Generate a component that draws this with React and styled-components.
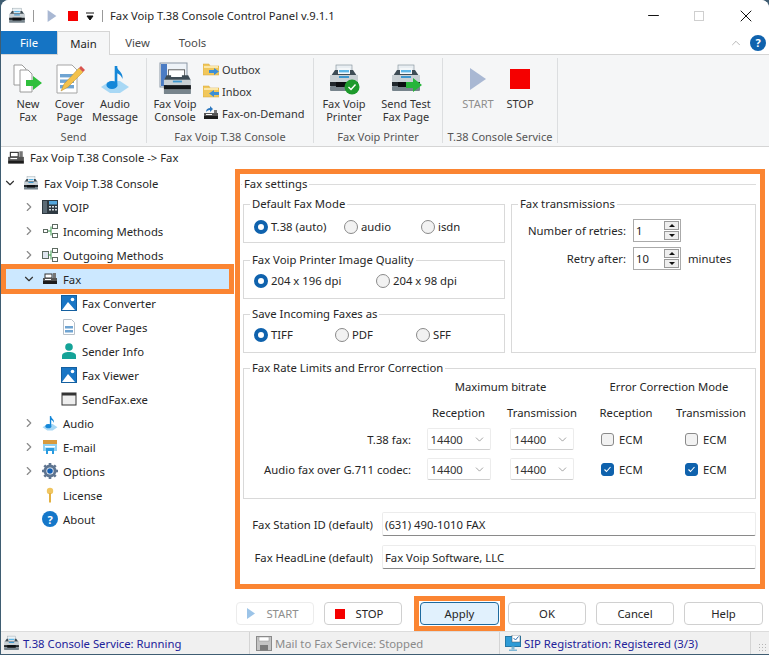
import styled, { createGlobalStyle } from 'styled-components';
import { ChevronDown, ChevronRight, ChevronUp, Minus, X } from 'lucide-react';

const ORANGE = '#fb8532';

const GlobalStyle = createGlobalStyle`
  html, body {
    margin: 0;
    padding: 0;
    width: 769px;
    height: 655px;
    overflow: hidden;
    background: #3f5d72;
  }
  * { box-sizing: border-box; }
  body {
    font-family: "Noto Sans", "Open Sans", sans-serif;
    font-size: 11.3px;
    color: #262626;
  }
`;

const Window = styled.div`
  width: 768px;
  height: 654px;
  margin-left: 1px;
  background: #fff;
  border-radius: 8px 8px 0 0;
  display: flex;
  flex-direction: column;
  overflow: hidden;
`;

const TitleBar = styled.div`
  height: 31px;
  flex: none;
  display: flex;
  align-items: center;
  padding-left: 7px;
  background: #fff;
`;

const QuickSep = styled.div`
  width: 1px;
  height: 12px;
  background: #999;
  margin-left: ${(p) => p.$left || 0}px;
`;

const QuickSlot = styled.div`
  display: flex;
  margin-left: ${(p) => p.$left}px;
`;

const Title = styled.div`
  font-size: 11.25px;
  margin-left: 7px;
  color: #1f1f1f;
`;

const WinControls = styled.div`
  margin-left: auto;
  display: flex;
  align-items: center;
  padding-right: 13px;
  gap: 32px;
`;

const MaxBox = styled.div`
  width: 10px;
  height: 10px;
  border: 1px solid #cfcfcf;
`;

const TabRow = styled.div`
  height: 23px;
  flex: none;
  display: flex;
  align-items: stretch;
  position: relative;
`;

const FileTab = styled.div`
  width: 56px;
  background: #1574c4;
  color: #fff;
  display: flex;
  align-items: center;
  justify-content: center;
`;

const Tab = styled.div`
  width: ${(p) => p.$w}px;
  display: flex;
  align-items: center;
  justify-content: center;
  color: #4a4a4a;
  ${(p) => p.$active && `
    background: #f5f6f7;
    color: #262626;
    border: 1px solid #d5d5d5;
    border-bottom: none;
    margin-bottom: -1px;
    position: relative;
    z-index: 1;
  `}
`;

const TabTools = styled.div`
  margin-left: auto;
  display: flex;
  align-items: center;
  gap: 7px;
  padding-right: 3px;
`;

const HelpDot = styled.div`
  width: 16px;
  height: 16px;
  border-radius: 50%;
  background: ${(p) => p.$bg || '#0f62ad'};
  color: #fff;
  font-weight: 700;
  font-size: 11px;
  line-height: 1;
  display: flex;
  align-items: center;
  justify-content: center;
  flex: none;
`;

const Ribbon = styled.div`
  height: 93px;
  flex: none;
  background: #f5f6f7;
  border-top: 1px solid #d5d5d5;
  border-bottom: 1px solid #d5d5d5;
  display: flex;
`;

const RibbonGroup = styled.div`
  width: ${(p) => p.$w}px;
  display: flex;
  flex-direction: column;
  margin: 3px 0;
  border-right: 1px solid #dcdee0;
`;

const GroupBody = styled.div`
  flex: 1;
  display: flex;
  padding-left: ${(p) => p.$pad || 0}px;
`;

const GroupLabel = styled.div`
  height: 17px;
  margin-bottom: -3px;
  text-align: center;
  color: #555;
  font-size: 11px;
`;

const BigButton = styled.div`
  width: ${(p) => p.$w}px;
  display: flex;
  flex-direction: column;
  align-items: center;
  color: ${(p) => (p.$disabled ? '#8e8e8e' : '#333')};
`;

const BigIcon = styled.div`
  height: 33px;
  margin-top: 4px;
  display: flex;
  align-items: center;
  justify-content: center;
`;

const BigLabel = styled.div`
  margin-top: 2px;
  text-align: center;
  line-height: 13px;
  font-size: 11px;
  white-space: pre-line;
`;

const SmallList = styled.div`
  display: flex;
  flex-direction: column;
  margin-left: 3px;
  padding-top: 3px;
  gap: 6px;
`;

const SmallButton = styled.div`
  height: 16px;
  display: flex;
  align-items: center;
  gap: 3px;
  font-size: 11px;
  color: #333;
`;

const Breadcrumb = styled.div`
  height: 22px;
  flex: none;
  padding-left: 6px;
  padding-bottom: 1px;
  display: flex;
  align-items: center;
  gap: 5px;
`;

const Body = styled.div`
  flex: 1;
  min-height: 0;
  display: flex;
`;

const Tree = styled.div`
  width: 234px;
  flex: none;
  padding-top: 2px;
`;

const TreeRow = styled.div`
  height: 24px;
  display: flex;
  align-items: center;
  padding-left: ${(p) => p.$indent}px;
`;

const SelectedRow = styled(TreeRow)`
  height: 20px;
  margin: 2px 6px 2px 5px;
  background: #cce8ff;
  outline: 5px solid ${ORANGE};
  padding-left: ${(p) => p.$indent - 5}px;
`;

const Caret = styled.div`
  width: 16px;
  height: 16px;
  flex: none;
  display: flex;
  align-items: center;
  justify-content: center;
  margin-right: 5px;
  color: ${(p) => (p.$open ? '#333' : '#8a8a8a')};
`;

const TreeIcon = styled.div`
  width: 16px;
  height: 16px;
  flex: none;
  margin-right: 5px;
  display: flex;
  align-items: center;
  justify-content: center;
`;

const Main = styled.div`
  flex: 1;
  display: flex;
  flex-direction: column;
`;

const Panel = styled.div`
  width: 530px;
  height: 421px;
  border: 5px solid ${ORANGE};
  padding: 2px 5px 0 1px;
`;

const SettingsSet = styled.fieldset`
  margin: 0;
  padding: 4px 0 0 2px;
  border: none;
  border-top: 1px solid #dcdcdc;
`;

const Legend = styled.legend`
  padding: 0 2px;
  margin-left: ${(p) => p.$left ?? 6}px;
  line-height: 16px;
`;

const Group = styled.fieldset`
  margin: ${(p) => p.$mt || 0}px 0 0;
  padding: 0;
  min-width: 0;
  height: ${(p) => p.$h}px;
  border: 1px solid #d9d9d9;
`;

const TopGrid = styled.div`
  display: grid;
  grid-template-columns: 262px 245px;
  column-gap: 6px;
`;

const LeftCol = styled.div`
  display: flex;
  flex-direction: column;
`;

const RadioRow = styled.div`
  display: flex;
  padding: ${(p) => p.$top}px 0 0 10px;
`;

const RadioOption = styled.div`
  width: ${(p) => p.$w}px;
  display: flex;
  align-items: center;
  gap: 3px;
`;

const RadioDot = styled.span`
  width: 14px;
  height: 14px;
  flex: none;
  border-radius: 50%;
  ${(p) =>
    p.$on
      ? 'background: #fff; border: 4px solid #0f62ad;'
      : 'background: #f2f2f2; border: 1px solid #8a8a8a;'}
`;

const SpinRow = styled.div`
  display: grid;
  grid-template-columns: 114px 48px auto;
  column-gap: 7px;
  align-items: center;
  margin-top: ${(p) => p.$top}px;
`;

const SpinLabel = styled.div`
  text-align: right;
`;

const SpinBox = styled.div`
  height: 23px;
  border: 1px solid #aaa;
  display: flex;
  align-items: center;
  justify-content: space-between;
  padding: 0 1px 0 2px;
`;

const SpinArrows = styled.div`
  display: flex;
  flex-direction: column;
  gap: 1px;
`;

const SpinArrow = styled.div`
  width: 15px;
  height: 9px;
  background: #eee;
  border: 1px solid #999;
  display: flex;
  align-items: center;
  justify-content: center;
  &::before {
    content: '';
    border-left: 3px solid transparent;
    border-right: 3px solid transparent;
    ${(p) => (p.$down ? 'border-top: 3px solid #111;' : 'border-bottom: 3px solid #111;')}
  }
`;

const RateGroup = styled(Group)`
  width: 513px;
`;

const RateGrid = styled.div`
  display: grid;
  grid-template-columns: 173px 83px 84px 84px 86px;
  grid-template-rows: 21px 30px 24px 36px;
  align-items: center;
  justify-items: center;
`;

const HeadSpan = styled.div`
  grid-column: span 2;
`;

const RowLabel = styled.div`
  justify-self: end;
  padding-right: 6px;
`;

const SelectBox = styled.div`
  width: 64px;
  height: 22px;
  background: #fff;
  border: 1px solid #ececec;
  border-bottom-color: #cfcfcf;
  border-radius: 2px;
  display: flex;
  align-items: center;
  justify-content: space-between;
  padding: 0 4px 0 3px;
  color: #333;
`;

const EcmCell = styled.div`
  justify-self: start;
  padding-left: 17px;
  display: flex;
  align-items: center;
  gap: 5px;
`;

const CheckBox = styled.span`
  width: 13px;
  height: 13px;
  border-radius: 3px;
  display: flex;
  align-items: center;
  justify-content: center;
  background: ${(p) => (p.$on ? '#0f62ad' : '#f2f2f2')};
  border: 1px solid ${(p) => (p.$on ? '#0f62ad' : '#8a8a8a')};
`;

const StationList = styled.div`
  margin-top: 13px;
  display: flex;
  flex-direction: column;
  gap: 9px;
`;

const StationRow = styled.div`
  display: flex;
  align-items: center;
`;

const StationLabel = styled.div`
  width: 130px;
  text-align: right;
  white-space: nowrap;
`;

const StationInput = styled.div`
  width: 374px;
  height: 24px;
  margin-left: 9px;
  border: 1px solid #ececec;
  border-bottom-color: #8a8a8a;
  border-radius: 2px;
  display: flex;
  align-items: center;
  padding-left: 2px;
`;

const ButtonBar = styled.div`
  display: flex;
  align-items: center;
  margin-top: 7px;
  gap: 10px;
  padding-left: 1px;
`;

const Btn = styled.div`
  width: ${(p) => p.$w || 78}px;
  height: 23px;
  flex: none;
  border: 1px solid ${(p) => (p.$disabled ? '#ececec' : '#d0d0d0')};
  border-radius: 4px;
  background: #fff;
  color: ${(p) => (p.$disabled ? '#8e8e8e' : '#262626')};
  display: flex;
  align-items: center;
  justify-content: center;
  gap: 11px;
  padding-right: ${(p) => p.$shift || 0}px;
`;

const ApplyFrame = styled.div`
  flex: none;
  border: 5px solid ${ORANGE};
  padding: 1px;
  margin: 0 -7px 0 2px;
`;

const ApplyBtn = styled(Btn)`
  background: #e1f1fd;
  border: 1px solid #1e6a9e;
`;

const StatusBar = styled.div`
  height: 23px;
  flex: none;
  background: #f0f0f0;
  border-top: 1px solid #dcdcdc;
  display: flex;
  position: relative;
`;

const StatusCell = styled.div`
  width: ${(p) => p.$w}px;
  display: flex;
  align-items: center;
  gap: 3px;
  padding-left: ${(p) => p.$pad}px;
  border-right: 1px solid #d4d4d4;
  color: ${(p) => p.$color};
  white-space: nowrap;
  overflow: hidden;
`;

const GripIcon = styled.div`
  position: absolute;
  right: 2px;
  bottom: 2px;
  width: 9px;
  height: 9px;
  background-image: radial-gradient(#b5b5b5 1px, transparent 1px);
  background-size: 3px 3px;
`;

const StopSquare = styled.div`
  width: ${(p) => p.$size}px;
  height: ${(p) => p.$size}px;
  background: #f50000;
  flex: none;
`;

const Printer = ({ size = 32, badge }) => (
  <svg width={size} height={size} viewBox="0 0 32 32">
    <rect x="8" y="2" width="16" height="9" fill="#e8eef2" stroke="#7c8b94" strokeWidth=".6" />
    <path d="M7 7h18l4 6H3z" fill="#3e4c55" />
    <rect x="10" y="5" width="12" height="6" fill="#f4f7f9" />
    <rect x="11" y="7" width="10" height="2.4" fill="#5cb6e6" />
    <rect x="2" y="12" width="28" height="7" fill="#c9d0d4" />
    <rect x="11" y="13" width="10" height="2" fill="#3d97cf" />
    <rect x="2" y="19" width="28" height="4" fill="#20272c" />
    <rect x="2" y="23" width="28" height="5" rx="1" fill="#77848c" />
    <rect x="8" y="19" width="16" height="5" fill="#0c0f12" />
    {badge === 'check' && (
      <>
        <circle cx="24" cy="24" r="7.5" fill="#1d9a2c" />
        <path d="M20.5 24l2.5 2.5 4.5-5" fill="none" stroke="#fff" strokeWidth="1.4" />
      </>
    )}
    {badge === 'arrow' && <path d="M16 19h7v-4l9 7-9 7v-4h-7z" fill="#27b53a" />}
  </svg>
);

const FaxMini = ({ size = 16 }) => (
  <svg width={size} height={size} viewBox="0 0 16 16">
    <rect x="3" y="3" width="7" height="4" fill="#fff" stroke="#333" />
    <rect x="11" y="2" width="3" height="6" fill="#777" />
    <rect x="1" y="7" width="14" height="3" fill="#555" />
    <rect x="1" y="10" width="14" height="3" fill="#1c1c1c" />
    <rect x="3" y="8" width="6" height="1" fill="#fff" />
  </svg>
);

const NewFaxIcon = () => (
  <svg width="30" height="30" viewBox="0 0 30 30">
    <path d="M1 1h8l4 4v16H1z" fill="#fff" stroke="#9a9a9a" />
    <path d="M7 6h8l4 4v18H7z" fill="#fff" stroke="#9a9a9a" />
    <path d="M13 16h7v-4l9 7-9 7v-4h-7z" fill="#2fbf3c" />
  </svg>
);

const CoverIcon = () => (
  <svg width="30" height="30" viewBox="0 0 30 30">
    <path d="M2 1h15l5 5v23H2z" fill="#fff" stroke="#a5a5a5" />
    <rect x="5" y="10" width="14" height="3.4" fill="#6fa4d2" />
    <rect x="5" y="15.5" width="14" height="3.4" fill="#6fa4d2" />
    <rect x="5" y="21" width="14" height="3.4" fill="#6fa4d2" />
    <path d="M6 27l3-7L24 4l4 4-15 15z" fill="#f3c14b" stroke="#b98a28" strokeWidth=".5" />
    <path d="M24 4l2-2 4 4-2 2z" fill="#d9534f" />
  </svg>
);

const NoteIcon = ({ size = 30 }) => (
  <svg width={size} height={size} viewBox="0 0 30 30">
    <path d="M1 23l9-6h10l9 6-9 6H10z" fill="#a8d8f5" />
    <path d="M16 2v18" stroke="#1587d8" strokeWidth="2.6" />
    <ellipse cx="12" cy="21" rx="5.6" ry="4" fill="#1587d8" />
    <path d="M16.5 2c1 5 7 6 6 13-1-3-3-5-6-6z" fill="#1587d8" />
  </svg>
);

const ConsoleIcon = () => (
  <svg width="33" height="33" viewBox="0 0 33 33">
    <rect x="1" y="1" width="27" height="24" fill="#eef3f8" stroke="#8b97a6" />
    <rect x="2" y="2" width="6" height="22" fill="#4b7cc4" />
    <g transform="translate(4 6) scale(.9)">
      <rect x="6" y="2" width="18" height="9" fill="#fff" stroke="#555" />
      <path d="M4 8h24l3 6H1z" fill="#3e4c55" />
      <rect x="9" y="7" width="12" height="3" fill="#fff" />
      <rect x="1" y="13" width="30" height="6" fill="#c9d0d4" />
      <rect x="11" y="14" width="10" height="2" fill="#3d97cf" />
      <rect x="1" y="19" width="30" height="5" fill="#14181b" />
      <rect x="1" y="24" width="30" height="5" rx="1" fill="#77848c" />
    </g>
  </svg>
);

const FolderIcon = ({ arrow }) => (
  <svg width="16" height="16" viewBox="0 0 16 16">
    <path d="M0 3h6l1 2h9v9H0z" fill="#f1c75b" stroke="#d6a63a" strokeWidth=".5" />
    <rect x="1" y="5" width="14" height="2" fill="#fbe7a9" />
    <path
      d={arrow === 'right' ? 'M6 9h5V7l5 3.5-5 3.5v-2H6z' : 'M16 9h-5V7l-5 3.5 5 3.5v-2h5z'}
      fill="#3c8fd6"
    />
  </svg>
);

const DemandIcon = () => (
  <svg width="16" height="16" viewBox="0 0 16 16">
    <path d="M3 7c0-3 2-4 4-4V1l3 3-3 3V5C5 5 4 6 3 7z" fill="#2d78bf" />
    <rect x="1" y="8" width="14" height="3" fill="#555" />
    <rect x="1" y="11" width="14" height="3" fill="#1c1c1c" />
    <rect x="3" y="9" width="6" height="1" fill="#fff" />
    <rect x="11" y="5" width="3" height="3" fill="#777" />
  </svg>
);

const PlayShape = ({ w = 16, h = 22, fill = '#a9b8d3' }) => (
  <svg width={w} height={h} viewBox="0 0 16 22">
    <path d="M0 0l16 11L0 22z" fill={fill} />
  </svg>
);

const PhoneIcon = () => (
  <svg width="16" height="16" viewBox="0 0 16 16">
    <rect x="0" y="1" width="16" height="14" fill="#2f3a42" />
    <rect x="1" y="2" width="4" height="12" fill="#5c6b75" />
    <rect x="7" y="2" width="8" height="3.5" fill="#55a7dd" />
    <path d="M7 7h2v1.5H7zM10 7h2v1.5h-2zM13 7h2v1.5h-2zM7 10h2v1.5H7zM10 10h2v1.5h-2zM13 10h2v1.5h-2z" fill="#d8dee2" />
  </svg>
);

const FlowIcon = ({ boxed }) => (
  <svg width="16" height="16" viewBox="0 0 16 16" fill="none" stroke="#5d6b62">
    <rect x={boxed ? 0.5 : 1.5} y={boxed ? 4.5 : 6.5} width={boxed ? 6 : 4} height={boxed ? 7 : 3} fill={boxed ? '#dfe5ef' : '#fff'} />
    <path d="M6 8h3M9 3.5v9" stroke="#3a9a4c" />
    <rect x="10.5" y="1.5" width="5" height="4" fill="#fff" />
    <rect x="10.5" y="10.5" width="5" height="4" fill="#fff" />
  </svg>
);

const PictureIcon = () => (
  <svg width="16" height="16" viewBox="0 0 16 16">
    <rect x=".5" y=".5" width="15" height="15" fill="#1976c5" stroke="#145f9f" />
    <path d="M1 15l6-8 7 8z" fill="#fff" />
    <circle cx="11.5" cy="4.5" r="1.8" fill="#fff" />
  </svg>
);

const PageIcon = () => (
  <svg width="16" height="16" viewBox="0 0 16 16">
    <path d="M2.5.5h8l3 3v12h-11z" fill="#fff" stroke="#b8c1c9" />
    <rect x="4" y="7" width="8" height="2.5" fill="#6fa4d2" />
    <rect x="4" y="11" width="8" height="2.5" fill="#6fa4d2" />
  </svg>
);

const PersonIcon = () => (
  <svg width="16" height="16" viewBox="0 0 16 16">
    <circle cx="8" cy="4" r="3.8" fill="#15a398" />
    <path d="M1 16v-3c0-3 3-4 7-4s7 1 7 4v3z" fill="#15a398" />
  </svg>
);

const WindowIcon = () => (
  <svg width="16" height="16" viewBox="0 0 16 16">
    <rect x="1" y="2" width="14" height="12" fill="#eee" stroke="#333" />
    <rect x="1" y="2" width="14" height="2.5" fill="#333" />
  </svg>
);

const MailIcon = () => (
  <svg width="16" height="16" viewBox="0 0 16 16">
    <rect x="1" y="1" width="14" height="4" fill="#d89a3c" />
    <rect x="1" y="5" width="14" height="7" fill="#8fd0f2" />
    <rect x="4" y="9" width="8" height="6" fill="#2a9be0" />
    <rect x="6" y="12" width="4" height="3" fill="#fff" />
    <rect x="3" y="7" width="10" height="1.5" fill="#fff" />
  </svg>
);

const GearIcon = () => (
  <svg width="16" height="16" viewBox="0 0 16 16">
    <circle cx="8" cy="8" r="6.5" fill="#5f7590" />
    <path d="M8 0v16M0 8h16M2.3 2.3l11.4 11.4M13.7 2.3L2.3 13.7" stroke="#5f7590" strokeWidth="2.6" />
    <circle cx="8" cy="8" r="3.6" fill="#fff" />
    <circle cx="8" cy="8" r="2.8" fill="#1560b5" />
  </svg>
);

const KeyIcon = () => (
  <svg width="16" height="16" viewBox="0 0 16 16">
    <circle cx="8" cy="4" r="3.2" fill="#f0c560" />
    <path d="M7 6h2v9l-1 1-1-1z" fill="#e3b142" />
  </svg>
);

const SipIcon = () => (
  <svg width="16" height="16" viewBox="0 0 16 16">
    <rect x=".5" y="1.5" width="15" height="10" fill="#2e9bd6" stroke="#2478a6" />
    <rect x="7" y="0" width="8" height="7" fill="#fff" stroke="#456" strokeWidth=".5" />
    <path d="M8.5 3l2 2 3-3.5" fill="none" stroke="#2e6fb0" />
    <rect x="6.5" y="11.5" width="3" height="3" fill="#7fb7d6" />
    <rect x="4" y="14.5" width="8" height="1.5" fill="#7fb7d6" />
  </svg>
);

const MailStatusIcon = () => (
  <svg width="16" height="16" viewBox="0 0 16 16">
    <rect x=".5" y="1.5" width="15" height="14" fill="#c4c4c4" stroke="#8a8a8a" />
    <rect x="3" y="2" width="10" height="4" fill="#fff" stroke="#8a8a8a" strokeWidth=".5" />
    <rect x="4" y="10" width="8" height="5.5" fill="#7a7a7a" />
  </svg>
);

const Radio = ({ w, on, children }) => (
  <RadioOption $w={w}>
    <RadioDot $on={on} />
    {children}
  </RadioOption>
);

const Spin = ({ value }) => (
  <SpinBox>
    {value}
    <SpinArrows>
      <SpinArrow />
      <SpinArrow $down />
    </SpinArrows>
  </SpinBox>
);

const RateSelect = () => (
  <SelectBox>
    14400
    <ChevronDown size={13} strokeWidth={1} color="#555" />
  </SelectBox>
);

const Ecm = ({ on }) => (
  <EcmCell>
    <CheckBox $on={on}>
      {on && (
        <svg width="9" height="9" viewBox="0 0 9 9">
          <path d="M1.5 4.5l2 2 4-4.5" fill="none" stroke="#fff" strokeWidth="1.1" />
        </svg>
      )}
    </CheckBox>
    ECM
  </EcmCell>
);

const treeItems = [
  { label: 'VOIP', level: 1, icon: <PhoneIcon /> },
  { label: 'Incoming Methods', level: 1, icon: <FlowIcon /> },
  { label: 'Outgoing Methods', level: 1, icon: <FlowIcon boxed /> },
  { label: 'Fax', level: 1, icon: <FaxMini />, open: true, selected: true },
  { label: 'Fax Converter', level: 2, icon: <PictureIcon /> },
  { label: 'Cover Pages', level: 2, icon: <PageIcon /> },
  { label: 'Sender Info', level: 2, icon: <PersonIcon /> },
  { label: 'Fax Viewer', level: 2, icon: <PictureIcon /> },
  { label: 'SendFax.exe', level: 2, icon: <WindowIcon /> },
  { label: 'Audio', level: 1, icon: <NoteIcon size={16} /> },
  { label: 'E-mail', level: 1, icon: <MailIcon /> },
  { label: 'Options', level: 1, icon: <GearIcon /> },
  { label: 'License', level: 1, icon: <KeyIcon />, leaf: true },
  { label: 'About', level: 1, icon: <HelpDot $bg="#1577c9">?</HelpDot>, leaf: true },
];

const TreeItem = ({ item: { label, level, icon, open, selected, leaf } }) => {
  const Row = selected ? SelectedRow : TreeRow;
  return (
    <Row $indent={level === 2 ? 60 : 20}>
      {level === 1 && (
        <Caret $open={open}>
          {!leaf && (open ? <ChevronDown size={14} /> : <ChevronRight size={14} />)}
        </Caret>
      )}
      <TreeIcon>{icon}</TreeIcon>
      {label}
    </Row>
  );
};

const App = () => (
  <>
    <GlobalStyle />
    <Window>
      <TitleBar>
        <Printer size={18} />
        <QuickSep $left={7} />
        <QuickSlot $left={13}>
          <PlayShape w={10} h={12} />
        </QuickSlot>
        <QuickSlot $left={11}>
          <StopSquare $size={10} />
        </QuickSlot>
        <QuickSlot $left={7}>
          <svg width="10" height="10" viewBox="0 0 10 10">
            <path d="M1 2h8M2 5h6l-3 4z" stroke="#111" fill="#111" />
          </svg>
        </QuickSlot>
        <QuickSep $left={7} />
        <Title>Fax Voip T.38 Console Control Panel v.9.1.1</Title>
        <WinControls>
          <Minus size={17} strokeWidth={1.4} color="#111" />
          <MaxBox />
          <X size={20} strokeWidth={1.2} color="#111" />
        </WinControls>
      </TitleBar>
      <TabRow>
        <FileTab>File</FileTab>
        <Tab $w={53} $active>
          Main
        </Tab>
        <Tab $w={55}>View</Tab>
        <Tab $w={55}>Tools</Tab>
        <TabTools>
          <ChevronUp size={14} strokeWidth={1} color="#888" />
          <HelpDot>?</HelpDot>
        </TabTools>
      </TabRow>
      <Ribbon>
        <RibbonGroup $w={146}>
          <GroupBody $pad={7}>
            <BigButton $w={40}>
              <BigIcon>
                <NewFaxIcon />
              </BigIcon>
              <BigLabel>{'New\nFax'}</BigLabel>
            </BigButton>
            <BigButton $w={43}>
              <BigIcon>
                <CoverIcon />
              </BigIcon>
              <BigLabel>{'Cover\nPage'}</BigLabel>
            </BigButton>
            <BigButton $w={48}>
              <BigIcon>
                <NoteIcon />
              </BigIcon>
              <BigLabel>{'Audio\nMessage'}</BigLabel>
            </BigButton>
          </GroupBody>
          <GroupLabel>Send</GroupLabel>
        </RibbonGroup>
        <RibbonGroup $w={167}>
          <GroupBody $pad={3}>
            <BigButton $w={50}>
              <BigIcon>
                <ConsoleIcon />
              </BigIcon>
              <BigLabel>{'Fax Voip\nConsole'}</BigLabel>
            </BigButton>
            <SmallList>
              <SmallButton>
                <FolderIcon arrow="right" />
                Outbox
              </SmallButton>
              <SmallButton>
                <FolderIcon arrow="left" />
                Inbox
              </SmallButton>
              <SmallButton>
                <DemandIcon />
                Fax-on-Demand
              </SmallButton>
            </SmallList>
          </GroupBody>
          <GroupLabel>Fax Voip T.38 Console</GroupLabel>
        </RibbonGroup>
        <RibbonGroup $w={129}>
          <GroupBody $pad={4}>
            <BigButton $w={52}>
              <BigIcon>
                <Printer badge="check" />
              </BigIcon>
              <BigLabel>{'Fax Voip\nPrinter'}</BigLabel>
            </BigButton>
            <BigButton $w={72}>
              <BigIcon>
                <Printer badge="arrow" />
              </BigIcon>
              <BigLabel>{'Send Test\nFax Page'}</BigLabel>
            </BigButton>
          </GroupBody>
          <GroupLabel>Fax Voip Printer</GroupLabel>
        </RibbonGroup>
        <RibbonGroup $w={115}>
          <GroupBody $pad={14}>
            <BigButton $w={42} $disabled>
              <BigIcon>
                <PlayShape />
              </BigIcon>
              <BigLabel>START</BigLabel>
            </BigButton>
            <BigButton $w={42}>
              <BigIcon>
                <StopSquare $size={20} />
              </BigIcon>
              <BigLabel>STOP</BigLabel>
            </BigButton>
          </GroupBody>
          <GroupLabel>T.38 Console Service</GroupLabel>
        </RibbonGroup>
      </Ribbon>
      <Breadcrumb>
        <FaxMini size={18} />
        Fax Voip T.38 Console -&gt; Fax
      </Breadcrumb>
      <Body>
        <Tree>
          <TreeRow $indent={1}>
            <Caret $open>
              <ChevronDown size={14} />
            </Caret>
            <TreeIcon>
              <Printer size={17} />
            </TreeIcon>
            Fax Voip T.38 Console
          </TreeRow>
          {treeItems.map((item) => (
            <TreeItem key={item.label} item={item} />
          ))}
        </Tree>
        <Main>
          <Panel>
            <SettingsSet>
              <Legend $left={-1}>Fax settings</Legend>
              <TopGrid>
                <LeftCol>
                  <Group $h={47}>
                    <Legend>Default Fax Mode</Legend>
                    <RadioRow $top={7}>
                      <Radio w={90} on>
                        T.38 (auto)
                      </Radio>
                      <Radio w={77}>audio</Radio>
                      <Radio w={70}>isdn</Radio>
                    </RadioRow>
                  </Group>
                  <Group $h={47} $mt={9}>
                    <Legend>Fax Voip Printer Image Quality</Legend>
                    <RadioRow $top={5}>
                      <Radio w={122} on>
                        204 x 196 dpi
                      </Radio>
                      <Radio w={110}>204 x 98 dpi</Radio>
                    </RadioRow>
                  </Group>
                  <Group $h={47} $mt={7}>
                    <Legend>Save Incoming Faxes as</Legend>
                    <RadioRow $top={5}>
                      <Radio w={81} on>
                        TIFF
                      </Radio>
                      <Radio w={81}>PDF</Radio>
                      <Radio w={60}>SFF</Radio>
                    </RadioRow>
                  </Group>
                </LeftCol>
                <Group $h={157}>
                  <Legend>Fax transmissions</Legend>
                  <SpinRow $top={7}>
                    <SpinLabel>Number of retries:</SpinLabel>
                    <Spin value="1" />
                  </SpinRow>
                  <SpinRow $top={5}>
                    <SpinLabel>Retry after:</SpinLabel>
                    <Spin value="10" />
                    minutes
                  </SpinRow>
                </Group>
              </TopGrid>
              <RateGroup $h={139} $mt={7}>
                <Legend>Fax Rate Limits and Error Correction</Legend>
                <RateGrid>
                  <span />
                  <HeadSpan>Maximum bitrate</HeadSpan>
                  <HeadSpan>Error Correction Mode</HeadSpan>
                  <span />
                  <span>Reception</span>
                  <span>Transmission</span>
                  <span>Reception</span>
                  <span>Transmission</span>
                  <RowLabel>T.38 fax:</RowLabel>
                  <RateSelect />
                  <RateSelect />
                  <Ecm />
                  <Ecm />
                  <RowLabel>Audio fax over G.711 codec:</RowLabel>
                  <RateSelect />
                  <RateSelect />
                  <Ecm on />
                  <Ecm on />
                </RateGrid>
              </RateGroup>
              <StationList>
                <StationRow>
                  <StationLabel>Fax Station ID (default)</StationLabel>
                  <StationInput>(631) 490-1010 FAX</StationInput>
                </StationRow>
                <StationRow>
                  <StationLabel>Fax HeadLine (default)</StationLabel>
                  <StationInput>Fax Voip Software, LLC</StationInput>
                </StationRow>
              </StationList>
            </SettingsSet>
          </Panel>
          <ButtonBar>
            <Btn $disabled $shift={4}>
              <PlayShape w={8} h={11} fill="#9cc4e8" />
              START
            </Btn>
            <Btn $shift={8}>
              <StopSquare $size={10} />
              STOP
            </Btn>
            <ApplyFrame>
              <ApplyBtn $w={79}>Apply</ApplyBtn>
            </ApplyFrame>
            <Btn>OK</Btn>
            <Btn>Cancel</Btn>
            <Btn $w={79}>Help</Btn>
          </ButtonBar>
        </Main>
      </Body>
      <StatusBar>
        <StatusCell $w={249} $pad={2} $color="#22229a">
          <Printer size={17} />
          T.38 Console Service: Running
        </StatusCell>
        <StatusCell $w={250} $pad={6} $color="#8a8a8a">
          <MailStatusIcon />
          Mail to Fax Service: Stopped
        </StatusCell>
        <StatusCell $w={251} $pad={5} $color="#22229a">
          <SipIcon />
          SIP Registration: Registered (3/3)
        </StatusCell>
        <GripIcon />
      </StatusBar>
    </Window>
  </>
);

export default App;
